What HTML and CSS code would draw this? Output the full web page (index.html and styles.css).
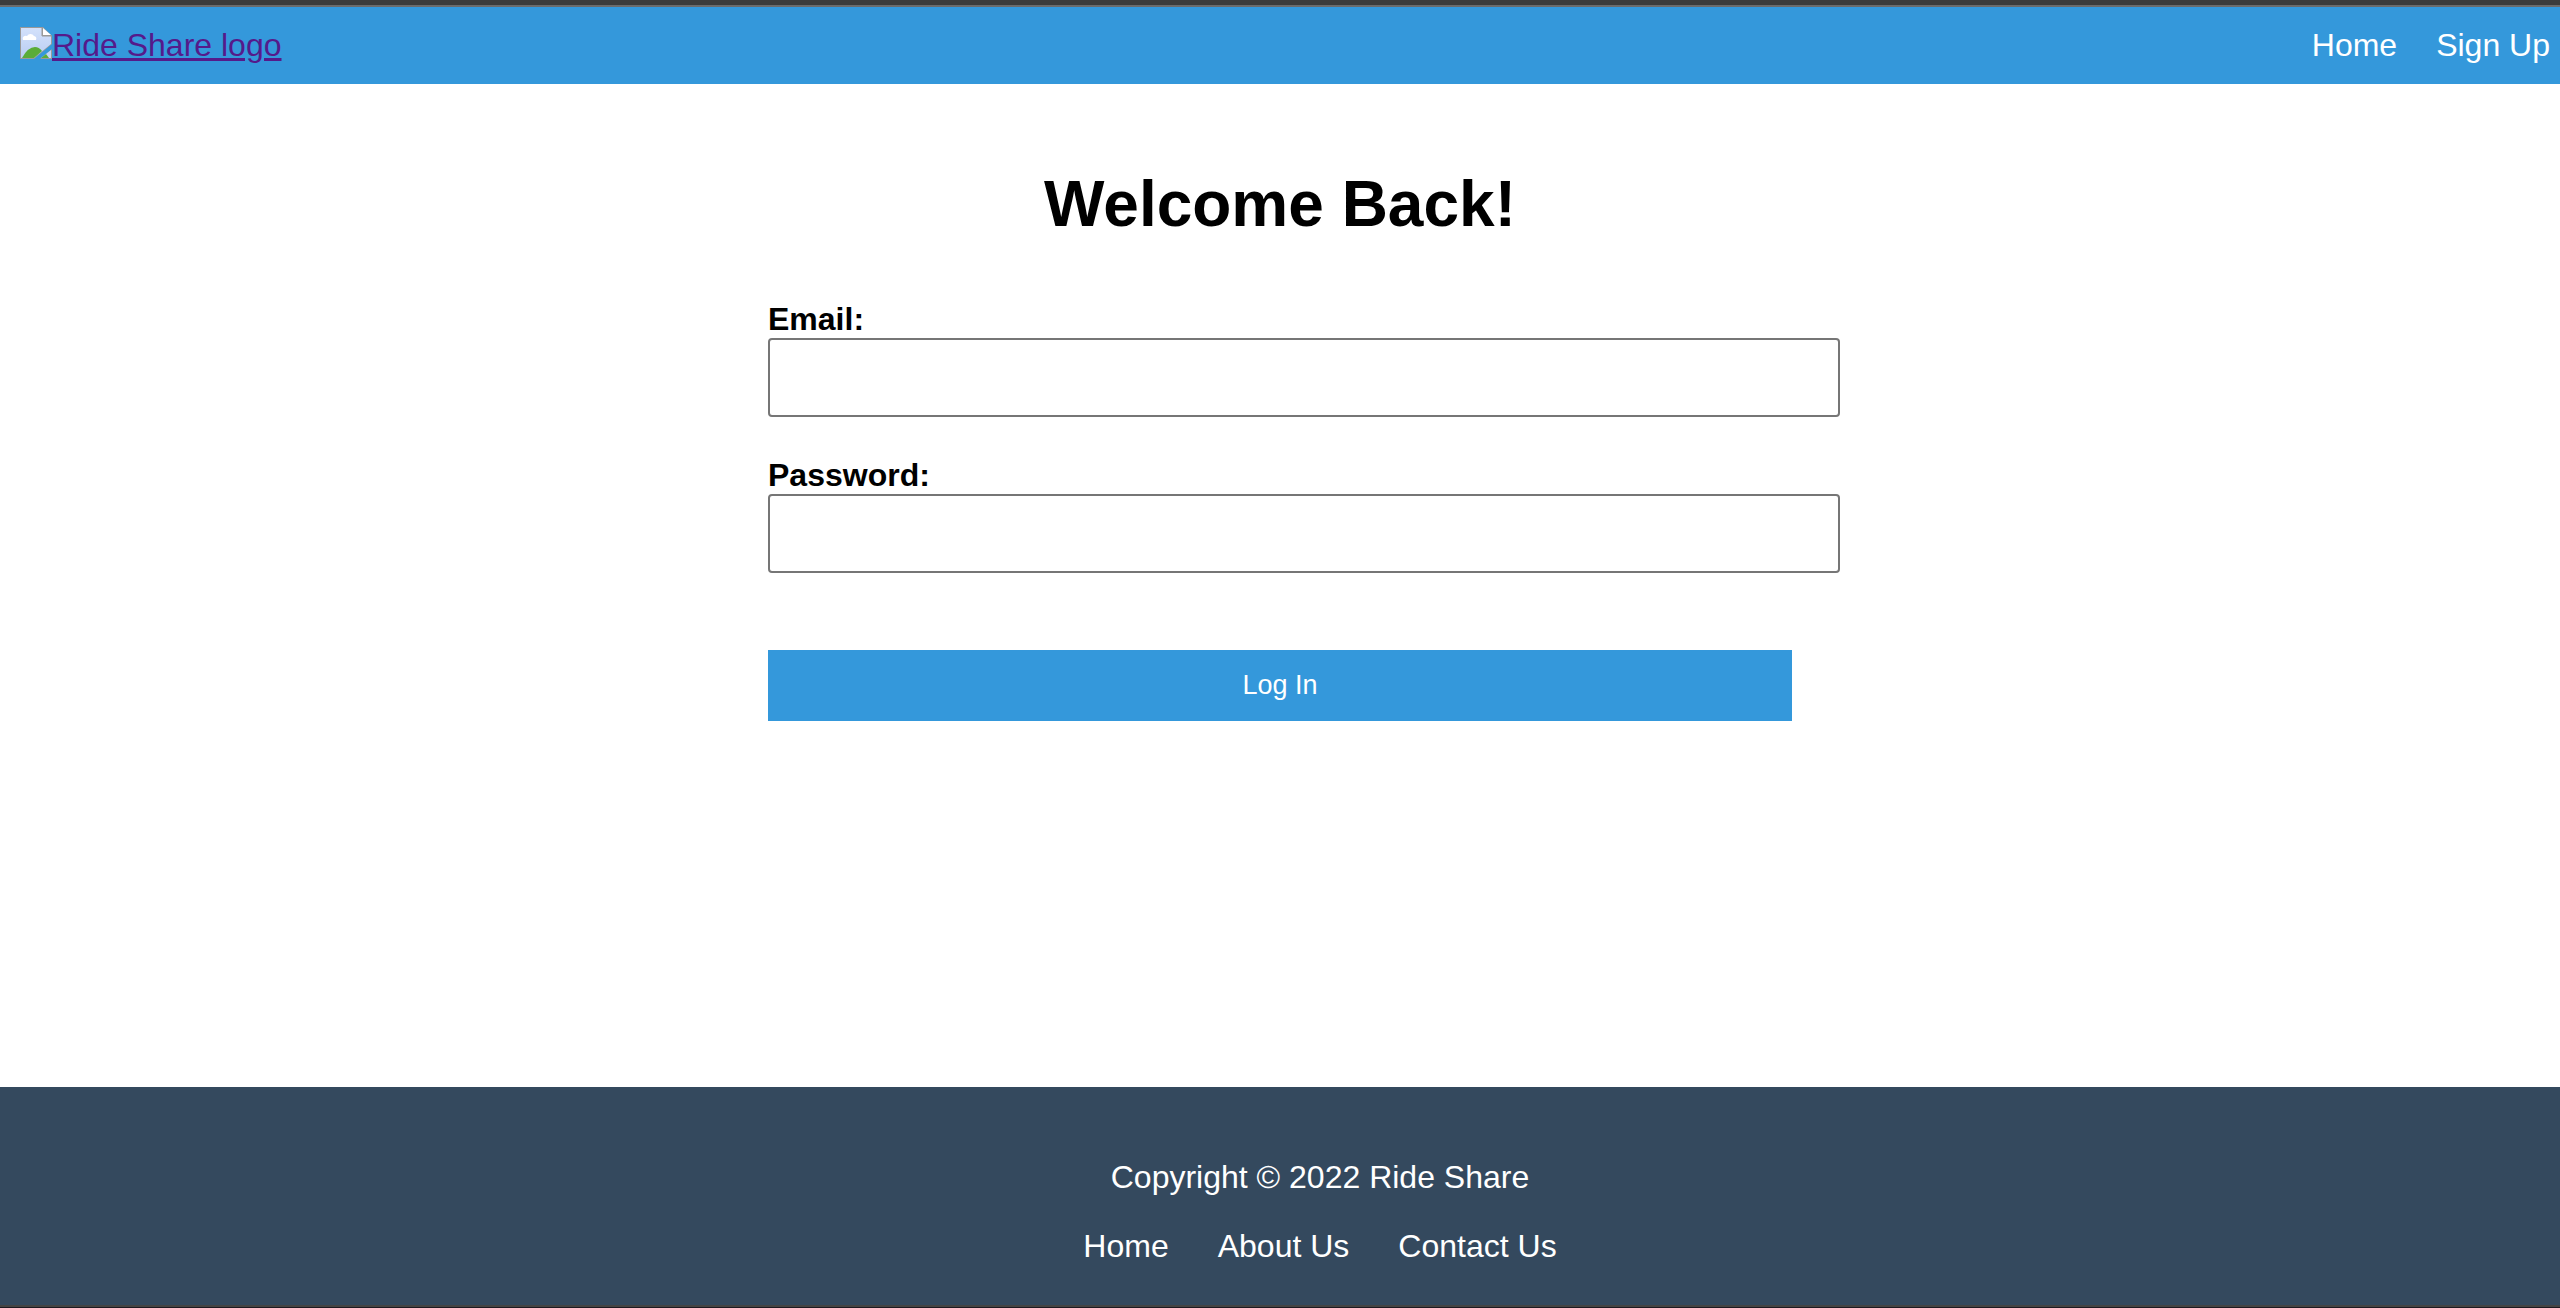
FILE: index.html
```html
<!DOCTYPE html>
<html lang="en">
<head>
  <meta charset="utf-8">
  <meta name="viewport" content="width=device-width, initial-scale=1">
  <title>Ride Share</title>
  <link rel="stylesheet" href="styles.css">
</head>
<body>
  <header class="site-header">
    <a class="logo" href="#">
      <svg class="logo-icon" viewBox="0 0 32 32" aria-hidden="true">
        <defs>
          <linearGradient id="sky" x1="0" y1="0" x2="0" y2="1">
            <stop offset="0" stop-color="#d3e1fb"/>
            <stop offset="1" stop-color="#b9cdf3"/>
          </linearGradient>
        </defs>
        <path d="M0 0H23L32 9V17L14 32H0Z" fill="#999"/>
        <path d="M1 1H22V9H31V17L14 31H1Z" fill="url(#sky)"/>
        <path d="M23 1V8H31Z" fill="#fff"/>
        <path d="M22 0V9H32" fill="none" stroke="#999"/>
        <path d="M3 13a3 3 0 0 1 4-4a4 4 0 0 1 7 0a3 3 0 0 1 2 4Z" fill="#fff"/>
        <path d="M2 31Q8 20 15 20Q19 20 22 24L14 31Z" fill="#5aac38"/>
        <path d="M32 22V32H20Z" fill="#999"/>
        <path d="M31 23V31H21Z" fill="#c3d4f5"/>
        <path d="M26 27L29 31H21Z" fill="#5aac38"/>
      </svg><span class="logo-text">Ride Share logo</span>
    </a>
    <nav class="site-nav">
      <a href="#">Home</a>
      <a href="#">Sign Up</a>
    </nav>
  </header>

  <main class="login">
    <h1>Welcome Back!</h1>
    <form class="login-form">
      <div class="field">
        <label for="email">Email:</label>
        <input type="email" id="email" name="email">
      </div>
      <div class="field">
        <label for="password">Password:</label>
        <input type="password" id="password" name="password">
      </div>
      <button type="submit">Log In</button>
    </form>
  </main>

  <footer class="site-footer">
    <p>Copyright © 2022 Ride Share</p>
    <nav class="footer-nav">
      <a href="#">Home</a>
      <a href="#">About Us</a>
      <a href="#">Contact Us</a>
    </nav>
  </footer>
</body>
</html>
```
FILE: styles.css
```css
*,
*::before,
*::after {
  box-sizing: border-box;
}

body {
  display: flex;
  flex-direction: column;
  min-height: 100vh;
  margin: 0;
  background: #fff;
  color: #000;
  font-family: "Liberation Sans", Arial, sans-serif;
  font-size: 32px;
  line-height: 37px;
}

/* Window edge above the header */
body::before {
  content: "";
  height: 7px;
  background: #3b3b3b;
  border-bottom: 2px solid #6b6b6b;
}

/* Window edge below the footer */
body::after {
  content: "";
  height: 3px;
  background: #1e1a20;
  border-top: 2px solid #444;
}

.site-header {
  display: flex;
  align-items: center;
  justify-content: space-between;
  padding: 20px 10px 20px 20px;
  background: #3498db;
}

.logo {
  display: flex;
  align-items: flex-start;
  color: #551a8b;
  text-decoration: none;
}

.logo-icon {
  width: 32px;
  height: 32px;
}

.logo-text {
  text-decoration: underline;
  text-decoration-thickness: 3px;
}

.site-nav {
  display: flex;
  gap: 39px;
}

.site-nav a,
.footer-nav a {
  color: #fff;
  text-decoration: none;
}

.login {
  flex: 1;
  width: 40%;
  margin: 0 auto;
  padding: 84px 0;
}

.login h1 {
  margin: 0 0 60px;
  font-size: 64px;
  line-height: 73px;
  text-align: center;
}

.login-form {
  display: flex;
  flex-direction: column;
  gap: 40px;
}

/* Fields run wider than the button on the right */
.field {
  display: flex;
  flex-direction: column;
  margin-right: -48px;
}

.field label {
  font-weight: bold;
}

.field input {
  height: 79px;
  padding: 20px;
  border: 2px solid #767676;
  border-radius: 4px;
  background: #fff;
  font: inherit;
}

.login-form button {
  margin-top: 37px;
  padding: 20px;
  border: 0;
  background: #3498db;
  color: #fff;
  font-family: inherit;
  font-size: 27px;
  line-height: 31px;
}

.site-footer {
  display: flex;
  flex-direction: column;
  align-items: center;
  gap: 32px;
  padding: 72px 0 40px 80px;
  background: #34495e;
  color: #fff;
}

.site-footer p {
  margin: 0;
}

.footer-nav {
  display: flex;
  gap: 49px;
}
```
